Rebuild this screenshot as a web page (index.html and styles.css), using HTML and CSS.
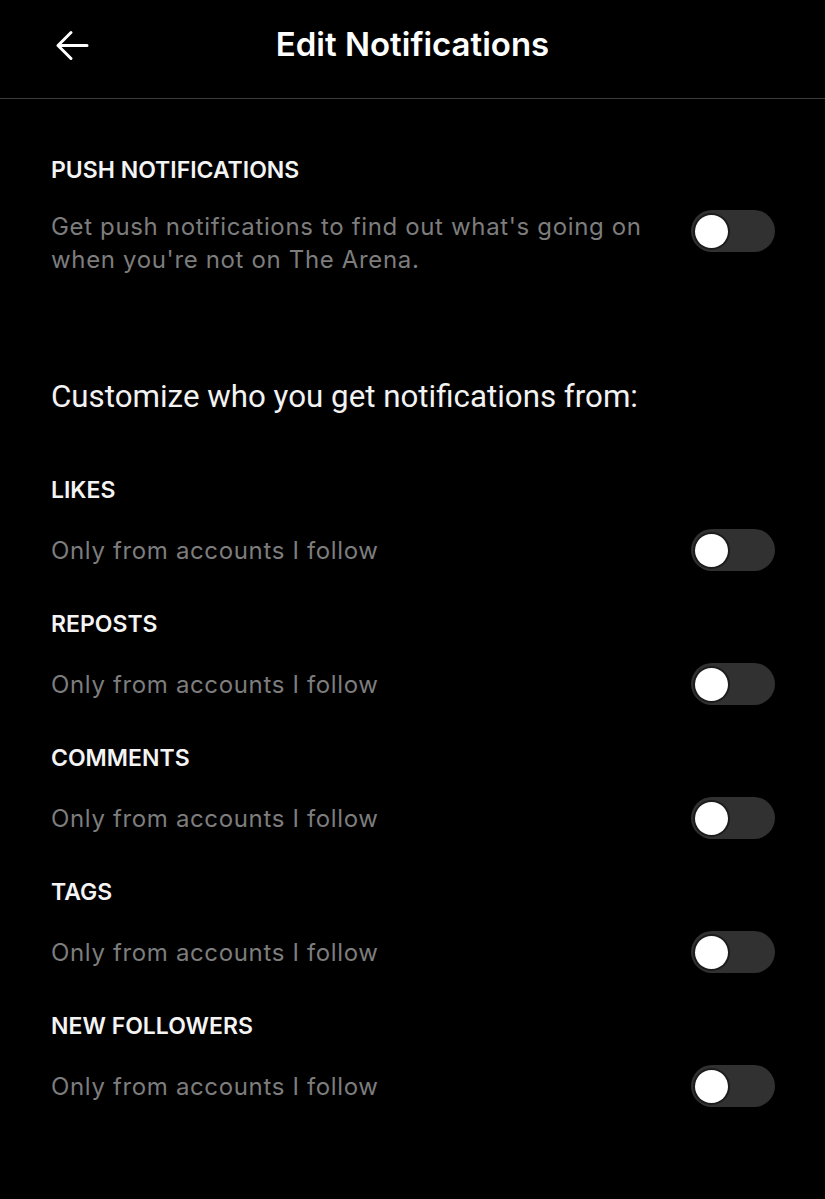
FILE: index.html
```html
<!DOCTYPE html>
<html lang="en">
<head>
    <meta charset="UTF-8">
    <meta name="viewport" content="width=device-width, initial-scale=1.0">
    <title>Edit Notifications</title>
    <link rel="stylesheet" href="styles.css">
</head>
<body>
    <div class="header">
        <div class="back">
            <svg width="34" height="34" viewBox="0 0 34 34" fill="none" stroke="#fff" stroke-width="3" stroke-linecap="round" stroke-linejoin="round">
                <path d="M32 16.5H3M16 3.5L3 16.5L16 29.5"/>
            </svg>
        </div>
        <div class="title">Edit Notifications</div>
        <div></div>
    </div>

    <div class="container">
        <!-- Push section -->
        <div class="push">
            <div class="label">PUSH NOTIFICATIONS</div>
            <div class="push-row">
                <div class="desc">Get push notifications to find out what's going on when you're not on The Arena.</div>
                <div class="toggle"><span class="knob"></span></div>
            </div>
        </div>

        <h2 class="subhead">Customize who you get notifications from:</h2>

        <div class="item">
            <div class="label">LIKES</div>
            <div class="row">
                <div class="desc">Only from accounts I follow</div>
                <div class="toggle"><span class="knob"></span></div>
            </div>
        </div>
        <div class="item">
            <div class="label">REPOSTS</div>
            <div class="row">
                <div class="desc">Only from accounts I follow</div>
                <div class="toggle"><span class="knob"></span></div>
            </div>
        </div>
        <div class="item">
            <div class="label">COMMENTS</div>
            <div class="row">
                <div class="desc">Only from accounts I follow</div>
                <div class="toggle"><span class="knob"></span></div>
            </div>
        </div>
        <div class="item">
            <div class="label">TAGS</div>
            <div class="row">
                <div class="desc">Only from accounts I follow</div>
                <div class="toggle"><span class="knob"></span></div>
            </div>
        </div>
        <div class="item">
            <div class="label">NEW FOLLOWERS</div>
            <div class="row">
                <div class="desc">Only from accounts I follow</div>
                <div class="toggle"><span class="knob"></span></div>
            </div>
        </div>
    </div>
</body>
</html>
```

FILE: styles.css
```css
body{
    margin: 0;
    padding: 0;
    background: #000;
    color: #fff;
    font-family: 'Inter', 'Roboto', sans-serif;
    height: 1199px;
}
.header{
    height: 98px;
    border-bottom: 1px solid #3c3c3c;
    display: grid;
    grid-template-columns: 1fr auto 1fr;
    align-items: center;
    padding: 0 55px;
}
.back{
    display: flex;
    align-items: center;
    padding-bottom: 6px;
}
.title{
    font-size: 33px;
    font-weight: 600;
    padding-bottom: 10px;
}
.container{
    padding: 58px 50px 0 51px;
}
.label{
    font-size: 23px;
    font-weight: 600;
    line-height: 26px;
    color: #f4f4f4;
}
.desc{
    font-size: 24px;
    line-height: 33px;
    color: #7d7d7d;
    letter-spacing: 0.65px;
}
.push-row{
    display: flex;
    justify-content: space-between;
    align-items: flex-start;
    gap: 40px;
    margin-top: 27px;
}
.push-row .desc{
    max-width: 600px;
}
.toggle{
    flex: none;
    width: 84px;
    height: 42px;
    border-radius: 21px;
    background: #313131;
    display: flex;
    align-items: center;
    padding: 0 4px;
    box-sizing: border-box;
}
.knob{
    width: 33px;
    height: 33px;
    border-radius: 50%;
    background: #fff;
    box-shadow: 0 0 0 2px #1c1c1c;
}
.subhead{
    font-family: 'Roboto', sans-serif;
    font-weight: 400;
    font-size: 31.3px;
    line-height: 34px;
    color: #f2f2f2;
    margin: 104px 0 63px;
}
.item{
    margin-bottom: 40px;
}
.row{
    display: flex;
    justify-content: space-between;
    align-items: center;
    height: 42px;
    margin-top: 26px;
}
```
